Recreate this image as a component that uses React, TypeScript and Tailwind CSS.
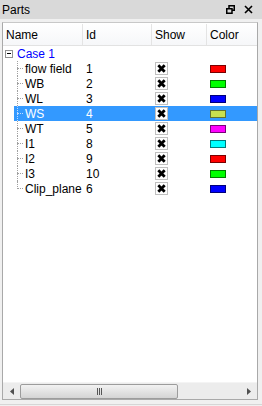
import React from "react";

const rows = [
  { name: "flow field", id: "1", color: "#ff0000", border: "#7a0000" },
  { name: "WB", id: "2", color: "#00ff00", border: "#007a00" },
  { name: "WL", id: "3", color: "#0000ff", border: "#00007a" },
  { name: "WS", id: "4", color: "#c8e050", border: "#607030", selected: true },
  { name: "WT", id: "5", color: "#ff00ff", border: "#7a007a" },
  { name: "I1", id: "8", color: "#00ffff", border: "#007a7a" },
  { name: "I2", id: "9", color: "#ff0000", border: "#7a0000" },
  { name: "I3", id: "10", color: "#00ff00", border: "#007a00" },
  { name: "Clip_plane", id: "6", color: "#0000ff", border: "#00007a" },
];

function CheckX() {
  return (
    <div className="w-[13px] h-[13px] border border-[#c0c0c0] bg-white flex items-center justify-center">
      <svg width="9" height="9" viewBox="0 0 9 9">
        <path d="M1.3 1.3 L7.7 7.7 M7.7 1.3 L1.3 7.7" stroke="#000" strokeWidth="2.8" strokeLinecap="butt" />
      </svg>
    </div>
  );
}

export default function App() {
  return (
    <div
      className="w-[262px] h-[406px] bg-[#f0f0f0] flex flex-col text-[12px] text-black overflow-hidden"
      style={{ fontFamily: '"Liberation Sans", Arial, sans-serif' }}
    >
      {/* title bar */}
      <div className="h-[19px] bg-[#d9d9d9] flex items-center justify-between pl-[2px] pr-[9px]">
        <span className="leading-none">Parts</span>
        <div className="flex items-center gap-[9px]">
          <svg width="9" height="9" viewBox="0 0 9 9">
            <rect x="3" y="0.75" width="5.25" height="4.5" fill="none" stroke="#000" strokeWidth="1.5" />
            <rect x="0.75" y="3.75" width="5.25" height="4.5" fill="#d9d9d9" stroke="#000" strokeWidth="1.5" />
          </svg>
          <svg width="9" height="9" viewBox="0 0 9 9">
            <path d="M1 1 L8 8 M8 1 L1 8" stroke="#000" strokeWidth="1.6" />
          </svg>
        </div>
      </div>

      {/* tree widget */}
      <div className="mt-[3px] ml-[2px] w-[256px] h-[378px] border border-[#a9a9a9] border-t-[#c8c8c8] bg-white flex flex-col">
        {/* header */}
        <div className="h-[23px] flex bg-gradient-to-b from-white to-[#f6f7f9] border-b border-[#e2e2e2] shrink-0 pt-[1px]">
          <div className="w-[80px] pl-[3px] flex items-center border-r border-[#e4e4e4]">Name</div>
          <div className="w-[69px] pl-[3px] flex items-center border-r border-[#e4e4e4]">Id</div>
          <div className="w-[55px] pl-[3px] flex items-center border-r border-[#e4e4e4]">Show</div>
          <div className="flex-1 pl-[3px] flex items-center">Color</div>
        </div>

        {/* body */}
        <div className="flex-1 flex flex-col">
          {/* Case 1 row */}
          <div className="h-[15px] flex items-center">
            <div className="w-[12px] flex justify-center">
              <div className="w-[8px] h-[8px] border border-[#919191] bg-white flex items-center justify-center">
                <div className="w-[4px] h-px bg-[#000]" />
              </div>
            </div>
            <span className="pl-[2px] text-[#0000ff] leading-none">Case 1</span>
          </div>
          {rows.map((r, i) => {
            const last = i === rows.length - 1;
            const sel = !!r.selected;
            return (
              <div key={r.name} className="h-[15px] flex">
                <div className="w-[11px] shrink-0" />
                <div className={`flex-1 flex ${sel ? "bg-[#3399ff]" : ""}`}>
                  <div className="w-[69px] flex items-center">
                    <div className="relative w-[8px] self-stretch ml-[3px]">
                      <div
                        className={`absolute left-0 top-0 border-l border-dotted ${sel ? "border-[#c0dcff]" : "border-[#a0a0a0]"} ${last ? "h-[8px]" : "h-full"}`}
                      />
                      <div
                        className={`absolute left-0 top-[7px] w-[6px] border-t border-dotted ${sel ? "border-[#c0dcff]" : "border-[#a0a0a0]"}`}
                      />
                    </div>
                    <span className={`whitespace-nowrap leading-none ${sel ? "text-white" : ""}`}>{r.name}</span>
                  </div>
                  <div className={`w-[69px] pl-[3px] flex items-center leading-none ${sel ? "text-white" : ""}`}>{r.id}</div>
                  <div className="w-[55px] pl-[3px] flex items-center">
                    <CheckX />
                  </div>
                  <div className="flex-1 pl-[3px] flex items-center">
                    <div
                      className="w-[16px] h-[8px] border"
                      style={{ backgroundColor: r.color, borderColor: r.border }}
                    />
                  </div>
                </div>
              </div>
            );
          })}
        </div>

        {/* horizontal scrollbar */}
        <div className="h-[17px] bg-[#ececec] flex items-center shrink-0 border-t border-[#f4f4f4]">
          <div className="w-[17px] h-full flex items-center justify-center">
            <svg width="4" height="7" viewBox="0 0 4 7">
              <path d="M4 0 L0 3.5 L4 7 Z" fill="#505050" />
            </svg>
          </div>
          <div className="w-[158px] h-[15px] rounded-[2px] border border-[#9c9c9c] bg-gradient-to-b from-[#f2f2f2] to-[#d4d4d4] flex items-center justify-center">
            <div className="flex gap-[1px]">
              <div className="w-px h-[7px] bg-[#555]" />
              <div className="w-px h-[7px] bg-[#555]" />
              <div className="w-px h-[7px] bg-[#555]" />
            </div>
          </div>
          <div className="flex-1" />
          <div className="w-[17px] h-full flex items-center justify-center">
            <svg width="4" height="7" viewBox="0 0 4 7">
              <path d="M0 0 L4 3.5 L0 7 Z" fill="#505050" />
            </svg>
          </div>
        </div>
      </div>
      <div className="mt-[4px] h-px bg-[#d6d6d6]" />
    </div>
  );
}
